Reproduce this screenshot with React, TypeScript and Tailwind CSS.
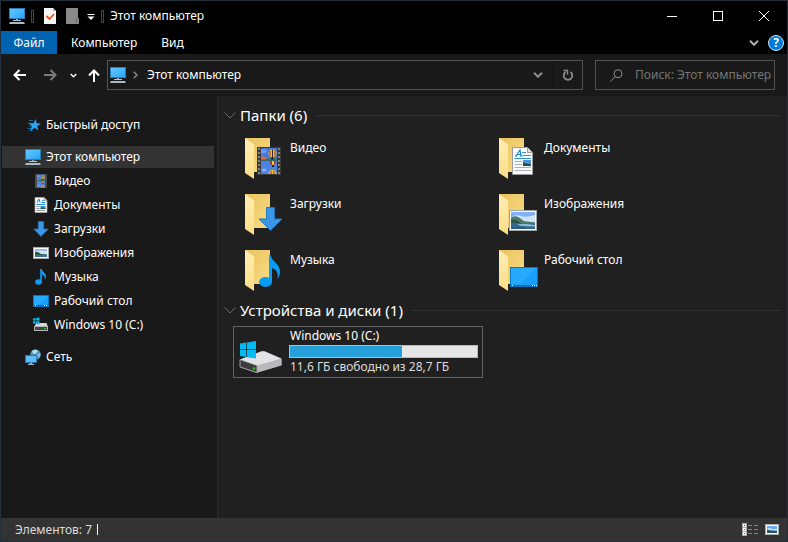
import React from 'react';

interface IconProps {
  className?: string;
}

function ComputerIcon({ className = 'w-4 h-4' }: IconProps) {
  return (
    <svg className={className} viewBox="0 0 16 16" aria-hidden="true">
      <defs>
        <linearGradient id="screen" x1="0" y1="0" x2="1" y2="1">
          <stop offset="0" stopColor="#62c4fb" />
          <stop offset="0.5" stopColor="#48b8fd" />
          <stop offset="1" stopColor="#26a3fb" />
        </linearGradient>
      </defs>
      <rect x="0" y="0" width="16" height="11" fill="#2b7fb8" />
      <rect x="1" y="1" width="14" height="9" fill="url(#screen)" />
      <rect x="7" y="11" width="2" height="1" fill="#8fa3b0" />
      <rect x="4" y="12" width="8" height="1" fill="#b3c6d3" />
      <path d="M1 14h14l1 2H0z" fill="#a9b9c5" />
    </svg>
  );
}

function StarIcon({ className = 'w-4 h-4' }: IconProps) {
  return (
    <svg className={className} viewBox="0 0 16 16" aria-hidden="true">
      <path d="M4 3.500h4M3 6.500h5M4 9h3M2.500 11.500h4M4.500 13.500h3" stroke="#12689f" strokeWidth="1" />
      <path d="M10.800 2l.8 4.200 4.400.4-3.700 2.300.8 4.600-3.300-2.700-4.300 3 1.400-4.900L4 6.500l4.500-.3z" fill="#27a9f7" />
    </svg>
  );
}

function FilmArt() {
  return (
    <>
      <rect x="0" y="0" width="24" height="28" fill="#3b3b3b" />
      <rect x="4" y="1" width="16" height="12.500" fill="#4677dc" />
      <rect x="4" y="14" width="16" height="13" fill="#4d84e4" />
      <path d="M4 3q4-2 6 1l-2 2-4 1z" fill="#6f9cf0" />
      <path d="M4 11.500h16v2H4z" fill="#2e7b45" />
      <path d="M4 9l4 1 2 1.500-2 1H4z" fill="#e2683a" />
      <circle cx="15.500" cy="6.500" r="4" fill="#f0c62c" />
      <path d="M13 3.500v6M18 3.500v6" stroke="#9c2631" />
      <path d="M15.500 2.500v8" stroke="#3a2430" />
      <path d="M14 10.500h3l-.5 2h-2z" fill="#222" />
      <path d="M12.500 14h6.500l-1.500 4h-3.500z" fill="#b3283f" />
      <path d="M15 14h2v4h-2z" fill="#f0c62c" />
      <rect x="15" y="18" width="2" height="2" fill="#1e2438" />
      <path d="M4 23q3-3 6 0l-3 2z" fill="#86aff3" />
      <path d="M11.500 27a4 4 0 0 1 8 0z" fill="#eac230" />
      <path d="M14 24v3M17 24v3" stroke="#a42d3c" />
      <path d="M2 1v27M22 1v27" stroke="#8b8b8b" strokeWidth="1.800" strokeDasharray="2 2" />
    </>
  );
}

function VideoIcon({ className = 'w-4 h-4' }: IconProps) {
  return (
    <svg className={className} viewBox="-4 -1 32 30" aria-hidden="true">
      <FilmArt />
    </svg>
  );
}

function DocumentArt() {
  return (
    <>
      <path d="M.5.5h15l5 5v22H.5z" fill="#f7f9fa" stroke="#9b9b9b" />
      <path d="M15.500.5v5h5" fill="#dedede" stroke="#9b9b9b" />
      <path d="M4 9L8 3l1 6M5.500 7.500H9M3 9h2M8 9h2.500" fill="none" stroke="#1c83cd" strokeWidth="1.200" />
      <path d="M10 5.500h4M11 8.500h8M2.500 11.500h16.500" stroke="#2e91d4" />
      <path d="M2.500 14.500H10M2.500 17.500H10M2.500 20.500h16.500M2.500 23.500h16.500" stroke="#b0b0b0" />
      <rect x="11" y="13" width="8" height="6" fill="#4d93d5" />
      <path d="M11 15.500l3 1 5 1V19h-8z" fill="#274d46" />
    </>
  );
}

function DocumentsIcon({ className = 'w-4 h-4' }: IconProps) {
  return (
    <svg className={className} viewBox="0 0 16 16" aria-hidden="true">
      <path d="M2 .5h9l3 3v12H2z" fill="#f5f7f8" stroke="#aaa" strokeWidth="0.700" />
      <path d="M11 .5v3h3" fill="#ccc" stroke="#999" strokeWidth="0.700" />
      <path d="M4 5.500l2-3.500 1 3.500M9 3.500h1.500M8.500 5.500H12M3.500 7.500H12" fill="none" stroke="#1b86d1" />
      <path d="M3.500 9.500h3M3.500 11.500h3M3.500 13.500H12" stroke="#999" />
      <rect x="7.500" y="9" width="5" height="3" fill="#428fc8" />
      <path d="M7.500 11l2-.7 3 1v.7h-5z" fill="#285b53" />
    </svg>
  );
}

function DownloadsIcon({ className = 'w-4 h-4' }: IconProps) {
  return (
    <svg className={className} viewBox="0 0 16 16" aria-hidden="true">
      <path d="M5.300.5h5.400V8h4.500L8 15.500.8 8h4.500z" fill="#3a97e8" stroke="#2279c4" strokeWidth="0.600" />
    </svg>
  );
}

function PictureArt() {
  return (
    <>
      <rect x="0.500" y="0.500" width="27" height="20" fill="#f7f7f7" stroke="#a5a5a5" />
      <rect x="2" y="2" width="24" height="17" fill="#7fb0f6" />
      <path d="M2 7q5-3 10-1t14-1v7H2z" fill="#cfe4fb" />
      <path d="M2 7.500q4-2 7-.5t6 4l11 1.500v1.500H2z" fill="#4e7d6c" />
      <path d="M2 9.500l5 .5 6 3.500H2z" fill="#2b5546" />
      <rect x="2" y="13.500" width="24" height="5.500" fill="#34698f" />
      <path d="M8 14h10l8 1v1.500l-14-.5z" fill="#8db9d2" />
      <path d="M2 18h14" stroke="#244e60" />
    </>
  );
}

function PicturesIcon({ className = 'w-4 h-4' }: IconProps) {
  return (
    <svg className={className} viewBox="0 0 16 16" aria-hidden="true">
      <rect y="2" width="16" height="12" fill="#a9a9a9" />
      <rect x="1" y="3" width="14" height="10" fill="#fff" />
      <rect x="2" y="4" width="12" height="8" fill="#8db9ee" />
      <path d="M2 6q6-1 12 0v3H2z" fill="#d2e5f8" />
      <path d="M2 6.500q4 0 6 2.500l6 .5v1H2z" fill="#2e5a50" />
      <path d="M2 10h12v2H2z" fill="#3f719b" />
    </svg>
  );
}

function MusicIcon({ className = 'w-4 h-4' }: IconProps) {
  return (
    <svg className={className} viewBox="0 0 16 16" aria-hidden="true">
      <ellipse cx="5.500" cy="13" rx="3.400" ry="2.700" fill="#0f9bf7" />
      <path d="M7.200 0h1.600c.2 3 4.700 4.200 4.200 7.500-.2 1.500-.8 2.500-1.500 3.300.8-3-.4-4.600-2.600-5.300V13H7.200z" fill="#0f9bf7" />
    </svg>
  );
}

function DesktopArt() {
  return (
    <>
      <rect x="0.500" y="0.500" width="27" height="19" fill="#16a0fb" stroke="#0877bd" />
      <path d="M1 1h26L11 17H1z" fill="#2eacff" opacity="0.700" />
      <path d="M1 18.500h26" stroke="#0b6bab" />
      <path d="M2 18.500h1M22 18.500h1M24 18.500h1M26 18.500h1" stroke="#fff" />
    </>
  );
}

function DesktopIcon({ className = 'w-4 h-4' }: IconProps) {
  return (
    <svg className={className} viewBox="0 0 16 16" aria-hidden="true">
      <rect x="0.500" y="2.500" width="15" height="11" fill="#14a0fb" stroke="#0879c0" />
      <path d="M1 3h14L6 12H1z" fill="#2eacff" opacity="0.700" />
      <path d="M1 12.500h14" stroke="#0b5c96" />
      <path d="M2 12.500h1M11 12.500h1M13 12.500h1" stroke="#fff" />
    </svg>
  );
}

function DriveIcon({ className = 'w-4 h-4' }: IconProps) {
  return (
    <svg className={className} viewBox="0 0 16 16" aria-hidden="true">
      <path d="M3.500 6h10l1.500 4H1z" fill="#d8d8d8" />
      <rect x="1.500" y="9.500" width="13" height="4" fill="#444" stroke="#b5b5b5" />
      <rect x="11" y="11" width="2" height="1" fill="#34d534" />
      <path d="M0 1.500l2.600-.4v2.500H0zM3.200 1L6.500.5v3.100H3.200zM0 4.200h2.600v2.600L0 6.400zM3.200 4.200h3.300v3.100l-3.300-.4z" fill="#00bcf2" />
    </svg>
  );
}

function NetworkIcon({ className = 'w-4 h-4' }: IconProps) {
  return (
    <svg className={className} viewBox="0 0 16 16" aria-hidden="true">
      <circle cx="10.500" cy="5.500" r="5.300" fill="#4f92b5" />
      <path d="M7 2q3-2.500 6 0l-2 2.500-3 .5z" fill="#b4dcec" />
      <path d="M12 5l3-1q1 3-1.500 5z" fill="#88bed6" />
      <rect x="0.400" y="6.400" width="11" height="7" fill="#5dbcfa" stroke="#2478b6" strokeWidth="0.800" />
      <path d="M5 13.500h2V15H5z" fill="#8ba7b8" />
      <path d="M3 15.300h6" stroke="#c3d5df" />
    </svg>
  );
}

function FolderIcon({ children }: { children: React.ReactNode }) {
  return (
    <svg className="w-10 h-11 shrink-0" viewBox="0 0 40 44" aria-hidden="true">
      <defs>
        <linearGradient id="folderBack" x1="0" y1="0" x2="1" y2="1">
          <stop offset="0" stopColor="#e9c35f" />
          <stop offset="1" stopColor="#f9dc85" />
        </linearGradient>
        <linearGradient id="folderFront" x1="0" y1="0" x2="0" y2="1">
          <stop offset="0" stopColor="#ffeeb4" />
          <stop offset="1" stopColor="#fadd86" />
        </linearGradient>
      </defs>
      <path d="M0 0h25v34H0z" fill="url(#folderBack)" />
      <path d="M0 0l9 6.500V41l-9-6z" fill="url(#folderFront)" />
      {children}
    </svg>
  );
}

function DriveLargeIcon() {
  return (
    <svg className="w-11 h-8 shrink-0" viewBox="0 0 44 32" aria-hidden="true">
      <path d="M1 18.500L22 10.500q2-.7 4 0l15.500 6.500q1 .5 1 1.500v6L19 31.500l-2 .3L1 26z" fill="#9a9a9c" />
      <path d="M1 18.500L22 10.500q2-.7 4 0l16.500 7.300L19 24.500q-1 .3-2 0z" fill="#e3e3e5" />
      <path d="M18 24.700l24.500-6.900v6.500L19 31.300l-1 .2z" fill="#b9b9bb" />
      <path d="M1 18.500l17 6v7L1 26z" fill="#3c3c3e" stroke="#b5b5b5" strokeWidth="0.800" />
      <circle cx="15" cy="27.500" r="1.200" fill="#25d425" />
      <path d="M1 2.500L7.300 1.500v6.700H1zM8 1.400L17 0v8.200H8zM1 9h6.300v7L1 15zM8 9h9v8.500L8 16.200z" fill="#00bcf2" />
    </svg>
  );
}

function Chevron({ className = 'w-2 h-2' }: IconProps) {
  return (
    <svg className={className} viewBox="0 0 10 6" fill="none" stroke="currentColor" aria-hidden="true">
      <path d="M1 .8l4 4 4-4" strokeWidth="2" />
    </svg>
  );
}

function Divider() {
  return <span className="w-[3px] h-[13px] border border-[#454545]" />;
}

const places = [
  { name: 'Видео', Icon: VideoIcon },
  { name: 'Документы', Icon: DocumentsIcon },
  { name: 'Загрузки', Icon: DownloadsIcon },
  { name: 'Изображения', Icon: PicturesIcon },
  { name: 'Музыка', Icon: MusicIcon },
  { name: 'Рабочий стол', Icon: DesktopIcon },
  { name: 'Windows 10 (C:)', Icon: DriveIcon },
];

const folders = [
  { name: 'Видео', art: <g transform="translate(12 9)"><FilmArt /></g> },
  { name: 'Документы', art: <g transform="translate(13 9)"><DocumentArt /></g> },
  {
    name: 'Загрузки',
    art: <path d="M21.500 13.500h8V25H37L25.500 36.500 14 25h7.500z" fill="#3b97e6" stroke="#2277bd" />,
  },
  { name: 'Изображения', art: <g transform="translate(10 16)"><PictureArt /></g> },
  {
    name: 'Музыка',
    art: (
      <g fill="#0a9bf5">
        <ellipse cx="20.500" cy="32" rx="6.500" ry="5" />
        <path d="M24 5h1.500c1.500 7 10 9 9.500 17.500-.1 2.500-1 4.500-2.500 6.500 1-6-1-9.500-5.500-11v14h-3z" />
      </g>
    ),
  },
  { name: 'Рабочий стол', art: <g transform="translate(11 17)"><DesktopArt /></g> },
];

function TitleBar() {
  return (
    <header className="flex items-center h-[30px] bg-black pl-2">
      <ComputerIcon />
      <div className="flex items-center ml-[6px]">
        <Divider />
        <button aria-label="Свойства" className="ml-[9px] w-4 h-4">
          <svg className="w-4 h-4" viewBox="0 0 16 16">
            <path d="M1 0h9l3 3v13H1z" fill="#f5f5f5" />
            <path d="M10 0v3h3" fill="#aaa" />
            <path d="M3.500 8l3 3 4.500-5" fill="none" stroke="#e8541e" strokeWidth="1.800" />
          </svg>
        </button>
        <button aria-label="Новая папка" className="ml-[7px] w-4 h-4">
          <svg className="w-4 h-4" viewBox="0 0 16 16">
            <path d="M0 0h12v10h1v6H0z" fill="#8a8a8a" />
            <path d="M10.500 15V10.500H12" fill="none" stroke="#666" />
          </svg>
        </button>
        <button aria-label="Настройка панели" className="ml-[5px] w-2 h-4">
          <svg className="w-2 h-4" viewBox="0 0 8 16">
            <path d="M.5 6.500h7" stroke="#fff" />
            <path d="M.5 8.500h7L4 12z" fill="#fff" />
          </svg>
        </button>
        <span className="ml-[6px] mr-[6px] flex">
          <Divider />
        </span>
      </div>
      <h1>Этот компьютер</h1>
      <div className="flex ml-auto self-stretch">
        <button aria-label="Свернуть" className="w-[46px] flex items-center justify-center">
          <span className="w-[10px] h-px bg-white" />
        </button>
        <button aria-label="Развернуть" className="w-[46px] flex items-center justify-center">
          <span className="w-[10px] h-[10px] border border-white" />
        </button>
        <button aria-label="Закрыть" className="w-[46px] flex items-center justify-center">
          <svg className="w-[10px] h-[10px]" viewBox="0 0 10 10" stroke="#fff">
            <path d="M0 0l10 10M10 0L0 10" />
          </svg>
        </button>
      </div>
    </header>
  );
}

function MenuBar() {
  return (
    <nav className="flex items-center h-[23px] bg-black">
      <button className="w-14 h-full bg-[#0063b1]">Файл</button>
      <button className="pl-[14px] pr-2">Компьютер</button>
      <button className="px-4">Вид</button>
      <button aria-label="Развернуть ленту" className="ml-auto text-[#b0b0b0]">
        <Chevron className="w-[10px] h-[6px]" />
      </button>
      <button
        aria-label="Справка"
        className="ml-[9px] mr-[3px] w-4 h-4 rounded-full border border-[#c9e4f8] bg-[#0078d7] font-bold leading-[14px]"
      >
        ?
      </button>
    </nav>
  );
}

function AddressBar() {
  return (
    <div className="flex items-center h-[42px] pl-3 pr-3">
      <div className="flex items-center w-[94px] shrink-0">
        <button aria-label="Назад">
          <svg className="w-[13px] h-3" viewBox="0 0 13 12" fill="none" stroke="#fff" strokeWidth="2">
            <path d="M13 6H2M6.500 1l-5 5 5 5" />
          </svg>
        </button>
        <button aria-label="Вперёд" className="ml-[18px]">
          <svg className="w-[13px] h-3" viewBox="0 0 13 12" fill="none" stroke="#7c7c7c" strokeWidth="2">
            <path d="M0 6h11M6.500 1l5 5-5 5" />
          </svg>
        </button>
        <button aria-label="Последние места" className="ml-[13px]">
          <Chevron className="w-[7px] h-[5px]" />
        </button>
        <button aria-label="Вверх" className="ml-[11px]">
          <svg className="w-3 h-[13px]" viewBox="0 0 12 13" fill="none" stroke="#fff" strokeWidth="2">
            <path d="M6 13V2M1 6.500l5-5 5 5" />
          </svg>
        </button>
      </div>
      <div className="flex items-center flex-1 h-[30px] border border-[#535353] pl-[2px]">
        <ComputerIcon />
        <svg className="w-[5px] h-2 ml-[7px]" viewBox="0 0 5 8" fill="none" stroke="#8a8a8a" strokeWidth="1.500">
          <path d="M.7.700L4 4 .7 7.300" />
        </svg>
        <button className="ml-[9px]">Этот компьютер</button>
        <button aria-label="Предыдущие расположения" className="ml-auto mr-[9px] text-[#8c8c8c]">
          <Chevron className="w-[10px] h-[6px]" />
        </button>
        <button
          aria-label="Обновить"
          className="w-[30px] h-full border-l border-[#131313] flex items-center justify-center"
        >
          <svg className="w-3 h-3" viewBox="0 0 12 12" fill="none" stroke="#8c8c8c" strokeWidth="1.800">
            <path d="M8.500 3A4.300 4.300 0 1 1 3.500 3" />
            <path d="M1.500 1.500h4v4" strokeWidth="1.500" />
          </svg>
        </button>
      </div>
      <label className="flex items-center w-[180px] h-[30px] ml-3 border border-[#535353] pl-[14px]">
        <svg className="w-[13px] h-[13px] shrink-0" viewBox="0 0 13 13" fill="none" stroke="#8f8f8f">
          <circle cx="8" cy="4.700" r="4" />
          <path d="M5 7.700L.5 12.500" />
        </svg>
        <input
          type="text"
          aria-label="Поиск"
          placeholder="Поиск: Этот компьютер"
          className="ml-3 w-full min-w-0 bg-transparent outline-none placeholder:text-[#767676]"
        />
      </label>
    </div>
  );
}

function Sidebar() {
  return (
    <nav className="w-[217px] shrink-0 pt-[17px] border-r border-[#2b2b2b]">
      <a href="#quick" className="flex items-center h-6 gap-[5px] pl-6">
        <StarIcon />
        Быстрый доступ
      </a>
      <a href="#computer" className="flex items-center h-[22px] gap-[5px] mt-[9px] mb-px ml-px mr-[3px] pl-[23px] bg-[#333]">
        <ComputerIcon />
        Этот компьютер
      </a>
      <ul>
        {places.map(({ name, Icon }) => (
          <li key={name}>
            <a href="#place" className="flex items-center h-6 gap-[5px] pl-8">
              <Icon />
              {name}
            </a>
          </li>
        ))}
      </ul>
      <a href="#network" className="flex items-center h-6 gap-[5px] mt-2 pl-6">
        <NetworkIcon />
        Сеть
      </a>
    </nav>
  );
}

function SectionHeader({ title }: { title: string }) {
  return (
    <div className="flex items-center h-6 pl-[6px] pr-[6px]">
      <svg className="w-3 h-[7px]" viewBox="0 0 12 7" fill="none" stroke="#6b6b6b">
        <path d="M.5.500l5.500 5.500L11.500.500" />
      </svg>
      <h2 className="ml-1 mr-2 text-[15px]">{title}</h2>
      <span className="flex-1 h-px bg-[#2f2f2f]" />
    </div>
  );
}

function DriveTile() {
  const usedPercent = 60;

  return (
    <button className="flex w-[250px] h-[52px] mt-1 ml-[15px] border border-[#636363] pl-[5px] pr-1 text-left">
      <span className="mt-[14px]">
        <DriveLargeIcon />
      </span>
      <span className="block flex-1 ml-[6px] leading-[18px]">
        <span className="block pl-px">Windows 10 (C:)</span>
        <span
          role="progressbar"
          aria-label="Занято на диске"
          aria-valuenow={usedPercent}
          className="block h-[13px] border border-[#bcbcbc] bg-[#e6e6e6]"
        >
          <span className="block h-full bg-[#26a0da]" style={{ width: `${usedPercent}%` }} />
        </span>
        <span className="block pl-px text-[#dcdcdc]">11,6 ГБ свободно из 28,7 ГБ</span>
      </span>
    </button>
  );
}

function Content() {
  return (
    <main className="flex-1 bg-[#202020] pt-[7px]">
      <SectionHeader title="Папки (6)" />
      <div className="grid grid-cols-[repeat(auto-fill,254px)] gap-y-4 mt-[11px] pl-[27px] mb-2">
        {folders.map(({ name, art }) => (
          <button key={name} className="flex items-start h-10 gap-[5px] text-left">
            <FolderIcon>{art}</FolderIcon>
            <span className="leading-5">{name}</span>
          </button>
        ))}
      </div>
      <SectionHeader title="Устройства и диски (1)" />
      <DriveTile />
    </main>
  );
}

function StatusBar() {
  return (
    <footer className="flex items-center h-[23px] bg-[#333] pl-[14px] pr-2 text-[#dcdcdc]">
      Элементов: 7
      <span className="w-px h-[11px] ml-[5px] bg-white" />
      <button aria-label="Таблица" className="ml-auto">
        <svg className="w-4 h-[13px]" viewBox="0 0 16 13">
          <path d="M0 0h5v13H0z" fill="#a9a9a9" />
          <path d="M1 1h3v3H1zM1 5h3v3H1zM1 9h3v3H1z" fill="#fff" />
          <path d="M2 2h1v1H2z" fill="#333" />
          <path d="M2 6h1v1H2z" fill="#2c77e0" />
          <path d="M2 10h1v1H2z" fill="#d22" />
          <path d="M6 2.500h4M12 2.500h4M6 6.500h4M12 6.500h4M6 10.500h4M12 10.500h4" stroke="#858585" />
        </svg>
      </button>
      <button aria-label="Крупные значки" className="ml-[7px]">
        <svg className="w-[14px] h-[11px]" viewBox="0 0 28 22">
          <rect width="28" height="22" fill="#aaa" />
          <rect x="2" y="2" width="24" height="18" fill="#fff" />
          <rect x="4" y="4" width="20" height="14" fill="#6da8f2" />
          <path d="M4 10q5-4 10 0h10v3H4z" fill="#c7e1f7" />
          <path d="M4 11l8 2 12 1v4H4z" fill="#25575f" />
        </svg>
      </button>
    </footer>
  );
}

export default function App() {
  return (
    <div className="flex flex-col min-h-screen border border-[#22303c] bg-[#191919] text-white text-[12px] leading-4 font-['Noto_Sans','Open_Sans',sans-serif]">
      <TitleBar />
      <MenuBar />
      <AddressBar />
      <div className="flex flex-1">
        <Sidebar />
        <Content />
      </div>
      <StatusBar />
    </div>
  );
}
